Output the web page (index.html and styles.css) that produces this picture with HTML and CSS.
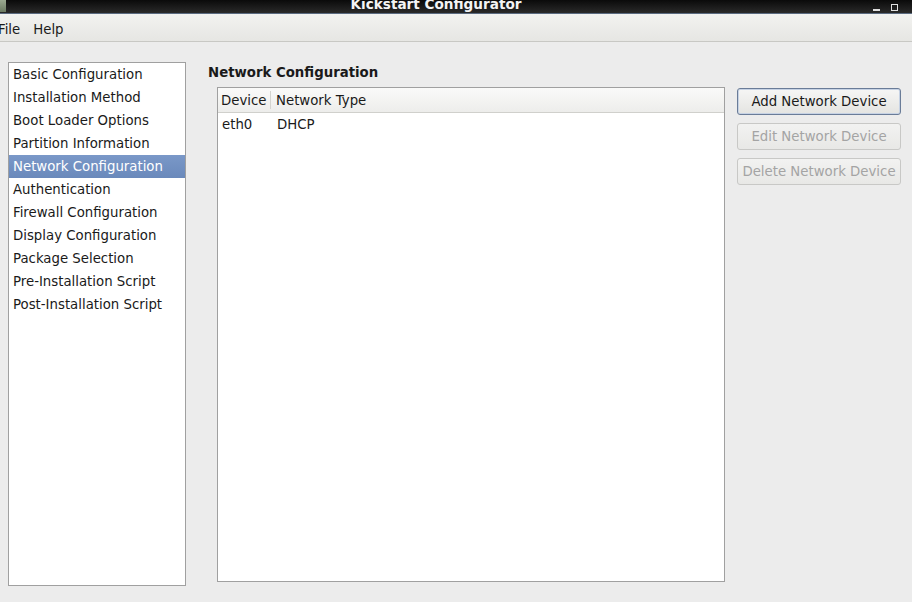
FILE: index.html
```html
<!DOCTYPE html>
<html>
<head>
<meta charset="utf-8">
<link rel="stylesheet" href="styles.css">
</head>
<body>
<div class="window">
  <div class="titlebar">
    <div class="app-icon"></div>
    <div class="title">Kickstart Configurator</div>
    <div class="wm-buttons">
      <span class="wm-min"></span>
      <span class="wm-max"></span>
    </div>
  </div>
  <div class="menubar">
    <span class="menu-item file">File</span>
    <span class="menu-item">Help</span>
  </div>
  <div class="content">
    <div class="sidebar">
      <div class="side-item">Basic Configuration</div>
      <div class="side-item">Installation Method</div>
      <div class="side-item">Boot Loader Options</div>
      <div class="side-item">Partition Information</div>
      <div class="side-item selected">Network Configuration</div>
      <div class="side-item">Authentication</div>
      <div class="side-item">Firewall Configuration</div>
      <div class="side-item">Display Configuration</div>
      <div class="side-item">Package Selection</div>
      <div class="side-item">Pre-Installation Script</div>
      <div class="side-item">Post-Installation Script</div>
    </div>
    <div class="main">
      <div class="heading">Network Configuration</div>
      <div class="main-row">
        <div class="table">
          <div class="thead">
            <div class="th col-dev">Device</div>
            <div class="th col-type">Network Type</div>
          </div>
          <div class="tr">
            <div class="td col-dev">eth0</div>
            <div class="td col-type">DHCP</div>
          </div>
        </div>
        <div class="buttons">
          <div class="btn focus">Add Network Device</div>
          <div class="btn disabled">Edit Network Device</div>
          <div class="btn disabled">Delete Network Device</div>
        </div>
      </div>
    </div>
  </div>
</div>
</body>
</html>
```
FILE: styles.css
```css
* { box-sizing: border-box; }
html, body {
  margin: 0;
  padding: 0;
  width: 912px;
  height: 602px;
  overflow: hidden;
  background: #ececec;
  font-family: "DejaVu Sans", sans-serif;
  font-size: 13.3px;
  color: #1a1a1a;
}
.window { display: flex; flex-direction: column; height: 602px; }
.titlebar {
  height: 14px;
  background: linear-gradient(#0a0a0a, #2a2a2a);
  border-bottom: 1px solid #5a6a80;
  position: relative;
  display: flex;
  justify-content: center;
  align-items: flex-end;
  overflow: hidden;
}
.title {
  color: #f4f4f4;
  font-weight: bold;
  font-size: 13.6px;
  line-height: 14px;
  margin-right: 40px;
  transform: translateY(-2px);
}
.app-icon {
  position: absolute;
  left: 0;
  top: 0;
  width: 6px;
  height: 12px;
  background: linear-gradient(#9aa890, #6b7a62);
}
.wm-buttons {
  position: absolute;
  right: 0;
  top: 0;
  height: 14px;
  display: flex;
  align-items: center;
  gap: 11px;
  padding-right: 14px;
}
.wm-min { width: 7px; height: 2px; background: #e0e0e0; margin-top: 6px; }
.wm-max { width: 7px; height: 7px; border: 1px solid #e0e0e0; }
.menubar {
  height: 28px;
  background: linear-gradient(#f2f2f0, #e6e6e3);
  border-bottom: 1px solid #c8c8c4;
  display: flex;
  align-items: center;
  padding-top: 5px;
}
.menu-item { padding: 0 7px; line-height: 22px; }
.menu-item.file { margin-left: -9px; margin-right: -1px; }
.content {
  flex: 1;
  display: flex;
  padding: 20px 0 0 8px;
}
.sidebar {
  width: 178px;
  height: 524px;
  background: #fff;
  border: 1px solid #a0a0a0;
}
.side-item {
  height: 23px;
  line-height: 23px;
  padding-left: 4px;
  white-space: nowrap;
}
.side-item.selected {
  background: linear-gradient(#7a98c8, #6a89bb);
  color: #fff;
}
.main {
  margin-left: 22px;
  display: flex;
  flex-direction: column;
}
.heading {
  font-weight: bold;
  line-height: 22px;
  height: 25px;
}
.main-row {
  display: flex;
  padding-left: 9px;
}
.table {
  width: 508px;
  height: 495px;
  background: #fff;
  border: 1px solid #a0a0a0;
}
.thead {
  display: flex;
  height: 25px;
  background: linear-gradient(#fafaf9, #ededeb);
  border-bottom: 1px solid #d0d0cc;
}
.th { padding-left: 3px; }
.th.col-dev { width: 53px; border-right: 1px solid #d4d4d0; margin: 3px 0; line-height: 20px; }
.th.col-type { padding-left: 5px; line-height: 26px; }
.tr { display: flex; height: 23px; line-height: 23px; }
.td.col-dev { width: 55px; padding-left: 4px; }
.td.col-type { padding-left: 4px; }
.buttons {
  margin-left: 12px;
  margin-top: 1px;
  display: flex;
  flex-direction: column;
  gap: 8px;
}
.btn {
  width: 164px;
  height: 27px;
  line-height: 25px;
  text-align: center;
  border: 1px solid #b0b0ac;
  border-radius: 3px;
  background: linear-gradient(#f6f6f5, #e4e4e1);
}
.btn.focus {
  border-color: #6a7c98;
  box-shadow: inset 0 0 0 1px #c6d2e4;
  color: #1a1a1a;
}
.btn.disabled {
  color: #a4a4a4;
  border-color: #c8c8c6;
  background: linear-gradient(#f2f2f1, #e8e8e6);
}
```
